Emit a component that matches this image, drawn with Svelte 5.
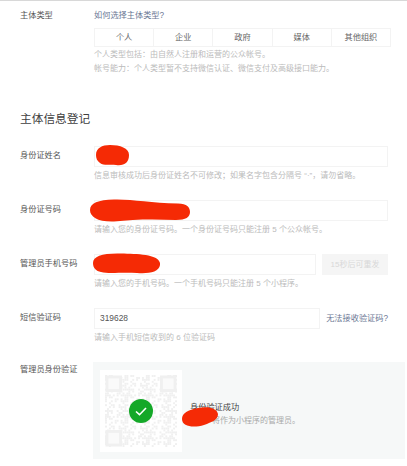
<script>
	const types = ['个人', '企业', '政府', '媒体', '其他组织'];

	// faint stand-in for the blurred QR code
	const cells = [];
	for (let y = 0; y < 37; y++) {
		for (let x = 0; x < 37; x++) {
			if ((x * x * 5 + y * y * 3 + x * y * 7 + x) % 11 < 5) cells.push({ x, y });
		}
	}
	const finders = [
		[0, 0],
		[28, 0],
		[0, 28]
	];
</script>

<div class="page">
	<section class="row type-row">
		<div class="label">主体类型</div>
		<div class="field">
			<a class="link" href="#top">如何选择主体类型?</a>
			<div class="segments">
				{#each types as t}
					<div class="segment">{t}</div>
				{/each}
			</div>
			<p class="tip">个人类型包括：由自然人注册和运营的公众帐号。</p>
			<p class="tip">帐号能力：个人类型暂不支持微信认证、微信支付及高级接口能力。</p>
		</div>
	</section>

	<h2>主体信息登记</h2>

	<section class="row">
		<div class="label">身份证姓名</div>
		<div class="field">
			<div class="input">
				<svg class="scribble s1" viewBox="0 0 33 21"><path d="M0 10C0 3 6 0 14 0C24 0 33 3 33 10C33 18 28 21 20 20C14 19 8 21 4 18C1 16 0 13 0 10Z" /></svg>
			</div>
			<p class="tip">信息审核成功后身份证姓名不可修改；如果名字包含分隔号 “·”，请勿省略。</p>
		</div>
	</section>

	<section class="row">
		<div class="label">身份证号码</div>
		<div class="field">
			<div class="input">
				<svg class="scribble s2" viewBox="0 0 100 23"><path d="M0 11C0 4 8 1 24 0.500C42 0 60 4 88 4.500C97 5 100 8 100 13C100 18 96 21 86 21C66 20 44 20 24 22.500C8 23 0 18 0 11Z" /></svg>
			</div>
			<p class="tip">请输入您的身份证号码。一个身份证号码只能注册 5 个公众帐号。</p>
		</div>
	</section>

	<section class="row">
		<div class="label">管理员手机号码</div>
		<div class="field">
			<div class="line">
				<div class="input grow">
					<svg class="scribble s3" viewBox="0 0 67 21"><path d="M0 10C0 3 10 0 28 0.500C44 1 65 1 67 10C68 19 56 21 44 20C28 19 16 21 8 19C3 18 0 15 0 10Z" /></svg>
				</div>
				<div class="resend">15秒后可重发</div>
			</div>
			<p class="tip">请输入您的手机号码。一个手机号码只能注册 5 个小程序。</p>
		</div>
	</section>

	<section class="row">
		<div class="label">短信验证码</div>
		<div class="field">
			<div class="line center">
				<div class="input grow code">319628</div>
				<a class="link" href="#top">无法接收验证码?</a>
			</div>
			<p class="tip">请输入手机短信收到的 6 位验证码</p>
		</div>
	</section>

	<section class="row verify-row">
		<div class="label">管理员身份验证</div>
		<div class="verify">
			<div class="qr">
				<svg class="qr-code" viewBox="0 0 37 37">
					{#each cells as c}
						<rect x={c.x} y={c.y} width="1" height="1" />
					{/each}
					{#each finders as f}
						<rect class="finder" x={f[0] + 1} y={f[1] + 1} width="7" height="7" />
					{/each}
				</svg>
				<svg class="check" viewBox="0 0 24 24">
					<circle cx="12" cy="12" r="12" fill="#14a828" />
					<path d="M7 12.500l3.500 3.200L17 9" />
				</svg>
			</div>
			<div class="result">
				<div class="ok">身份验证成功</div>
				<div class="desc">将作为小程序的管理员。</div>
				<svg class="scribble s4" viewBox="0 0 36 20"><path d="M0 12C0 6 6 3 16 1C26 -1 35 1 36 7C36 13 30 15 22 18C12 21 0 20 0 12Z" /></svg>
			</div>
		</div>
	</section>
</div>

<style>
	:global(body) {
		background: #fff;
	}

	.page {
		width: 407px;
		height: 466px;
		overflow: hidden;
		box-sizing: border-box;
		padding: 9px 0 0 20px;
		border-top: 1px solid #d8d8d8;
		font-family: 'Liberation Sans', 'Noto Sans CJK SC', sans-serif;
		font-size: 8.200px;
		color: #353535;
	}

	.row {
		display: flex;
		margin-bottom: 17px;
	}

	.type-row {
		margin-bottom: 0;
	}

	.label {
		width: 74px;
		flex: none;
		line-height: 20px;
		color: #555;
	}

	.type-row .label {
		line-height: 12px;
	}

	.verify-row .label {
		line-height: 16px;
	}

	.field {
		width: 294px;
	}

	.type-row .field {
		width: 297px;
	}

	.link {
		color: #6a7794;
		text-decoration: none;
		white-space: nowrap;
		line-height: 12px;
	}

	.type-row .link {
		display: block;
		margin-bottom: 6px;
	}

	.segments {
		display: flex;
		height: 19px;
		box-sizing: border-box;
		border: 1px solid #f3f3f3;
	}

	.segment {
		flex: 1;
		text-align: center;
		line-height: 17px;
		color: #666;
		border-left: 1px solid #f3f3f3;
	}

	.segment:first-child {
		border-left: none;
	}

	.tip {
		margin: 0;
		font-size: 8px;
		line-height: 14px;
		color: #bbb;
		white-space: nowrap;
	}

	.segments + .tip {
		margin-top: 1px;
	}

	h2 {
		margin: 33px 0 17px;
		font-size: 11.700px;
		line-height: 20px;
		font-weight: 400;
		color: #404040;
	}

	.input {
		position: relative;
		height: 21px;
		box-sizing: border-box;
		border: 1px solid #f3f3f3;
		margin-bottom: 2px;
		line-height: 19px;
	}

	.line {
		display: flex;
		align-items: flex-start;
		gap: 6px;
	}

	.center .link {
		margin-bottom: 2px;
		line-height: 21px;
	}

	.grow {
		flex: 1;
	}

	.code {
		padding-left: 5px;
		color: #555;
		font-size: 8.400px;
	}

	.resend {
		width: 66px;
		height: 21px;
		line-height: 21px;
		text-align: center;
		background: #f5f5f5;
		color: #d8d8d8;
		font-size: 8px;
		white-space: nowrap;
	}

	.scribble {
		position: absolute;
		fill: #f52a05;
	}

	.s1 {
		left: 1px;
		top: -2px;
		width: 33px;
		height: 21px;
	}

	.s2 {
		left: -5px;
		top: -2px;
		width: 100px;
		height: 23px;
	}

	.s3 {
		left: -2px;
		top: -2px;
		width: 67px;
		height: 21px;
	}

	.s4 {
		left: -8px;
		top: 6px;
		width: 36px;
		height: 20px;
	}

	.verify {
		display: flex;
		align-items: center;
		gap: 8px;
		width: 312px;
		height: 97px;
		margin-left: -1px;
		box-sizing: border-box;
		padding-left: 7px;
		background: #f6f8f8;
	}

	.qr {
		position: relative;
		width: 82px;
		height: 82px;
		background: #fff;
		flex: none;
	}

	.qr-code {
		display: block;
		width: 72px;
		height: 72px;
		padding: 5px;
		fill: #f0f0f0;
		filter: blur(0.5px);
	}

	.finder {
		fill: #fafafa;
		stroke: #f0f0f0;
		stroke-width: 1.500;
	}

	.check {
		position: absolute;
		left: 29px;
		top: 29px;
		width: 24px;
		height: 24px;
	}

	.check path {
		fill: none;
		stroke: #fff;
		stroke-width: 1.600;
	}

	.result {
		position: relative;
		margin-top: 6px;
		line-height: 13px;
	}

	.ok {
		color: #444;
	}

	.desc {
		margin-left: 22px;
		font-size: 8px;
		color: #aaa;
		white-space: nowrap;
	}
</style>
